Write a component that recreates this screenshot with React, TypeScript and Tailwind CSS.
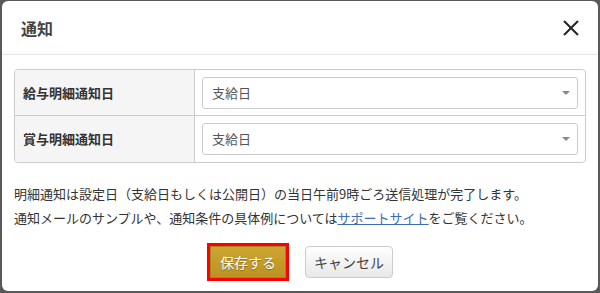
import React from "react";

function Select() {
  return (
    <div className="h-[32px] w-full border border-[#ccc] rounded-[3px] bg-white flex items-center justify-between pl-[9px] pr-[7px]">
      <span className="text-[13px] text-[#555]">支給日</span>
      <svg width="8" height="4" viewBox="0 0 8 4">
        <path d="M0 0 L8 0 L4 4 Z" fill="#888" />
      </svg>
    </div>
  );
}

export default function App() {
  return (
    <div
      className="w-[600px] h-[293px] bg-[#595959] pt-px pl-[2px]"
      style={{ fontFamily: '"Noto Sans CJK JP", "Noto Sans", sans-serif' }}
    >
      <div className="w-[596px] h-[290px] bg-white rounded-[6px] flex flex-col">
        <div className="h-[54px] border-b border-[#e5e5e5] flex items-center justify-between pl-[19px] pr-[19px]">
          <span className="text-[16px] font-bold text-[#444]">通知</span>
          <svg width="16" height="16" viewBox="0 0 16 16">
            <path d="M1 1 L15 15 M15 1 L1 15" stroke="#222" strokeWidth="2" />
          </svg>
        </div>
        <div className="px-3 pt-[14px]">
          <div className="border border-[#ccc] rounded-[4px] overflow-hidden">
            <div className="flex h-[46px] border-b border-[#ccc]">
              <div className="w-[180px] bg-[#f5f5f5] border-r border-[#ccc] pl-2 flex items-center font-bold text-[13px] text-[#333]">
                給与明細通知日
              </div>
              <div className="flex-1 px-[7px] flex items-center">
                <Select />
              </div>
            </div>
            <div className="flex h-[46px]">
              <div className="w-[180px] bg-[#f5f5f5] border-r border-[#ccc] pl-2 flex items-center font-bold text-[13px] text-[#333]">
                賞与明細通知日
              </div>
              <div className="flex-1 px-[7px] flex items-center">
                <Select />
              </div>
            </div>
          </div>
          <div className="mt-[19px] text-[13px] leading-[24px] text-[#333]">
            <p>明細通知は設定日（支給日もしくは公開日）の当日午前9時ごろ送信処理が完了します。</p>
            <p>
              通知メールのサンプルや、通知条件の具体例については
              <a className="text-[#3a6eb5] underline">サポートサイト</a>
              をご覧ください。
            </p>
          </div>
          <div className="mt-[13px] flex justify-center items-center gap-4">
            <div className="border-[3px] border-[#ff0000]">
              <button className="w-[76px] h-[32px] bg-gradient-to-b from-[#cda532] to-[#bc9322] border border-[#a8861e] text-white text-[14px] [text-shadow:0_1px_1px_rgba(0,0,0,0.3)]">
                保存する
              </button>
            </div>
            <button className="w-[88px] h-[32px] bg-gradient-to-b from-white to-[#e8e8e8] border border-[#ccc] rounded-[4px] text-[#444] text-[14px]">
              キャンセル
            </button>
          </div>
        </div>
      </div>
    </div>
  );
}
